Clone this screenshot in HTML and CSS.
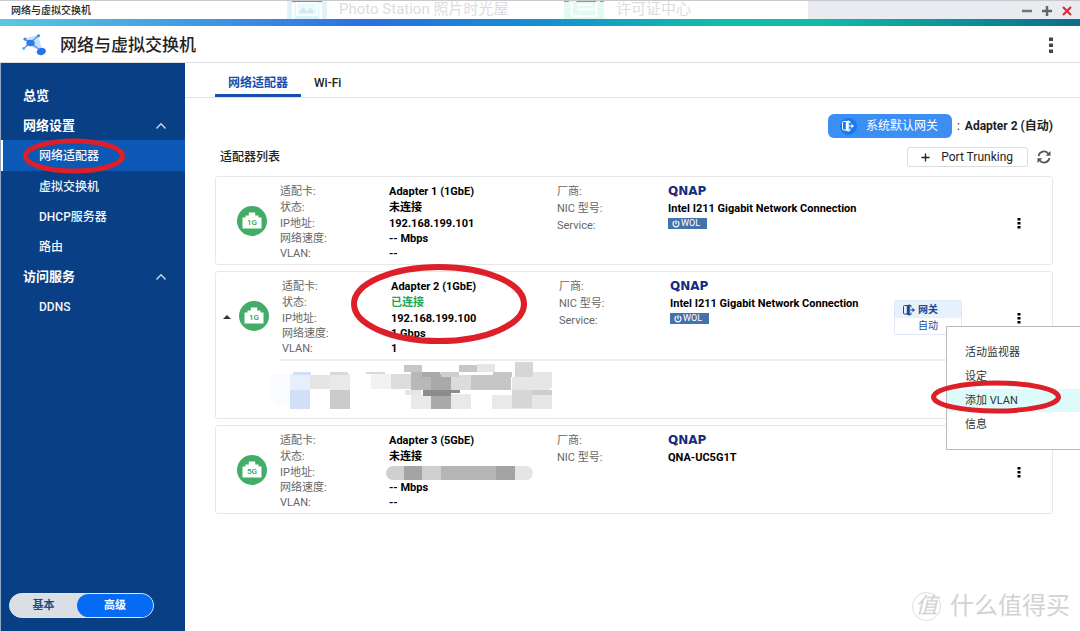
FILE: index.html
```html
<!DOCTYPE html>
<html lang="zh-CN">
<head>
<meta charset="utf-8">
<title>网络与虚拟交换机</title>
<link rel="stylesheet" href="styles.css">
</head>
<body>
<svg class="defs" aria-hidden="true">
  <symbol id="port" viewBox="0 0 30 30"><circle cx="15" cy="15" r="15" fill="#43ad68"/><path fill="#fff" d="M5.500 22.500V11.500H8.500V9.500H11.800V6.500H18.200V9.500H21.500V11.500H24.500V22.500Z"/></symbol>
  <symbol id="dots" viewBox="0 0 4 12"><path d="M.5 1h3v2.500h-3zM.5 5h3v2.500h-3zM.5 9h3v2.500h-3z"/></symbol>
  <symbol id="up" viewBox="0 0 12 8"><path d="M1.500 6.500 6 1.800l4.500 4.700" fill="none" stroke="currentColor" stroke-width="1.400"/></symbol>
  <symbol id="door" viewBox="0 0 12 12"><path d="M4.500 1.500H1.500Q.5 1.500.5 2.500v6.500q0 1 1 1H4M6.500 1.500h1.500v2M6.500 10.500h1.500V8.500" fill="none" stroke="currentColor" stroke-width="1"/><path d="M3.800 1.500 6.800.2v11.600L3.800 10.500zM7 5.500h2.500V3.800L12 6 9.500 8.200V6.500H7z" fill="currentColor"/></symbol>
  <symbol id="power" viewBox="0 0 8 8"><path d="M2.400 1.300A3 3 0 1 0 5.600 1.300M4 .3v4" fill="none" stroke="#fff" stroke-width="1.200"/></symbol>
</svg>

<header class="titlebar">
  <div class="desktop" aria-hidden="true">
    <svg class="ghost-icon" viewBox="0 0 42 19"><path fill="#dff2fa" d="M0 0h42v19H0z"/><path fill="#4b9cb9" d="M5 0h32v1H5z"/><path fill="#fff" d="M5 2h3v17H5zM34 2h3v17h-3z"/><path fill="#eef9fd" stroke="#fff" stroke-width="1.500" d="M10 2h22v13H10z"/><path fill="#cdeaf6" d="m12 13 5-7 4 5 4-4 5 6z"/></svg>
    <span class="ghost-photo">Photo Station 照片时光屋</span>
    <svg class="ghost-icon" viewBox="0 0 42 19"><path fill="#e3faf0" d="M0 0h42v19H0z"/><path fill="#54b78c" d="M0 0h5v1H0zM13 0h21v1H13zM38 0h4v1h-4z"/><path stroke="#fff" stroke-width="2" d="M8 1v15M34 1v15M14 4h16M14 9h18M8 16h26" fill="none"/></svg>
    <span>许可证中心</span>
  </div>
  <span class="window-title">网络与虚拟交换机</span>
  <div class="window-buttons">
    <button aria-label="最小化"><svg viewBox="0 0 10 10"><path d="M0 5h10" stroke="#737478" stroke-width="2.500"/></svg></button>
    <button aria-label="最大化"><svg viewBox="0 0 10 10"><path d="M0 5h10M5 0v10" stroke="#66676b" stroke-width="2.500"/></svg></button>
    <button aria-label="关闭"><svg viewBox="0 0 10 10"><path d="m1 1 8 8M9 1 1 9" stroke="#d3303d" stroke-width="2.200"/></svg></button>
  </div>
</header>
<div class="rainbow"></div>
<header class="app-header">
  <svg class="app-logo" viewBox="0 0 24 22"><path fill="#c9e2fb" d="m4 4 12-3 4 14-9-1z"/><path d="M1 15 8 9l9-8M2 5l7 4 10 8" fill="none" stroke="#5a9af0" stroke-width="1.600"/><ellipse cx="8.500" cy="9" rx="4.200" ry="3.200" fill="#3379ed"/><circle cx="3" cy="5" r="1.600" fill="#3f87ea"/><circle cx="16.500" cy="1.800" r="1.500" fill="#3f87ea"/><circle cx="1.800" cy="14.500" r="1.400" fill="#69a5f0"/><ellipse cx="19.300" cy="17.500" rx="4.600" ry="3.600" transform="rotate(-15 19.300 17.500)" fill="#2a72ea"/></svg>
  <h1>网络与虚拟交换机</h1>
  <button class="app-more" aria-label="更多"><svg viewBox="0 0 4 16"><path fill="#444" d="M0 .5h4v3.500H0zM0 6.500h4V10H0zM0 12.500h4V16H0z"/></svg></button>
</header>

<div class="shell">
  <aside class="sidebar">
    <nav>
      <a class="nav-group" href="#">总览</a>
      <a class="nav-group" href="#">网络设置<svg class="chevron"><use href="#up"/></svg></a>
      <a class="nav-item selected" href="#">网络适配器<svg class="mark mark-nav" viewBox="0 0 102 36"><ellipse cx="51" cy="18" rx="48.500" ry="15"/></svg></a>
      <a class="nav-item" href="#">虚拟交换机</a>
      <a class="nav-item" href="#">DHCP服务器</a>
      <a class="nav-item" href="#">路由</a>
      <a class="nav-group" href="#">访问服务<svg class="chevron"><use href="#up"/></svg></a>
      <a class="nav-item" href="#">DDNS</a>
    </nav>
    <div class="mode">
      <label><input type="radio" name="mode">基本</label>
      <label><input type="radio" name="mode" checked>高级</label>
    </div>
  </aside>

  <main>
    <nav class="tabs"><a class="tab active" href="#">网络适配器</a><a class="tab" href="#">Wi-Fi</a></nav>
    <div class="content">
      <div class="gateway-row">
        <button class="gateway-button"><span class="door-disc"><svg><use href="#door"/></svg></span>系统默认网关</button>
        <span>:</span><strong>Adapter 2 (自动)</strong>
      </div>
      <div class="list-head">
        <h2>适配器列表</h2>
        <button class="trunk"><svg viewBox="0 0 10 10"><path d="M.5 5h9M5 .5v9" stroke="#222" stroke-width="1.500"/></svg>Port Trunking</button>
        <button class="refresh" aria-label="刷新"><svg viewBox="0 0 14 14"><path d="M1.500 6A5.600 5.600 0 0 1 11.500 3.700M12.500 8A5.600 5.600 0 0 1 2.500 10.300" fill="none" stroke="#555" stroke-width="1.700"/><path fill="#555" d="M13.500 1v4.800H8.700zM.5 13V8.200h4.800z"/></svg></button>
      </div>

      <section class="card">
        <div class="card-row">
          <div class="port"><svg><use href="#port"/></svg><span>1G</span></div>
          <dl class="facts">
            <dt>适配卡:</dt><dd>Adapter 1 (1GbE)</dd>
            <dt>状态:</dt><dd>未连接</dd>
            <dt>IP地址:</dt><dd>192.168.199.101</dd>
            <dt>网络速度:</dt><dd>-- Mbps</dd>
            <dt>VLAN:</dt><dd>--</dd>
          </dl>
          <dl class="facts vendor">
            <dt>厂商:</dt><dd><span class="qnap">QNAP</span></dd>
            <dt>NIC 型号:</dt><dd>Intel I211 Gigabit Network Connection</dd>
            <dt>Service:</dt><dd><span class="wol"><svg><use href="#power"/></svg>WOL</span></dd>
          </dl>
          <button class="more" aria-label="更多"><svg><use href="#dots"/></svg></button>
        </div>
      </section>

      <section class="card expanded">
        <div class="card-row">
          <button class="caret" aria-label="收起"></button>
          <div class="port"><svg><use href="#port"/></svg><span>1G</span></div>
          <dl class="facts">
            <dt>适配卡:</dt><dd>Adapter 2 (1GbE)</dd>
            <dt>状态:</dt><dd class="online">已连接</dd>
            <dt>IP地址:</dt><dd>192.168.199.100</dd>
            <dt>网络速度:</dt><dd>1 Gbps</dd>
            <dt>VLAN:</dt><dd>1</dd>
          </dl>
          <dl class="facts vendor">
            <dt>厂商:</dt><dd><span class="qnap">QNAP</span></dd>
            <dt>NIC 型号:</dt><dd>Intel I211 Gigabit Network Connection</dd>
            <dt>Service:</dt><dd><span class="wol"><svg><use href="#power"/></svg>WOL</span></dd>
          </dl>
          <div class="gateway-tag"><b><svg><use href="#door"/></svg>网关</b><span>自动</span></div>
          <button class="more" aria-label="更多"><svg><use href="#dots"/></svg></button>
        </div>
        <div class="details">
          <svg class="mosaic" viewBox="0 0 284 48">
            <path fill="#fafbfe" d="M0 12h20v31H6L0 36z"/>
            <path fill="#e8effc" d="M20 12h20v16H20z"/><path fill="#d3dff6" d="M20 28h20v19H20zM23 10h18v3H23z"/>
            <path fill="#e4e4e5" d="M40 13h20v14H40z"/><path fill="#f2f2f3" d="M101 12h20v15h-20z"/>
            <path fill="#e9e9ea" d="M60 12h20v16H60zM141 33h20v14h-20zM181 32h20v15h-20zM222 33h20v14h-20z"/>
            <path fill="#cbcbcc" d="M60 28h20v19H60z"/><path fill="#d9d9da" d="M60 10h18v3H60zM96 10h19v2H96z"/>
            <path fill="#dcdcdd" d="M121 12h20v15h-20zM181 13h20v15h-20z"/>
            <path fill="#c6c6c7" d="M134 3h18v7h-18zM189 3h18v7h-18zM201 13h40v15h-40zM223 10h19v5h-19z"/>
            <path fill="#b8b8b9" d="M141 10h20v18h-20z"/><path fill="#a9a9aa" d="M152 10h18l2 5h9v13h-20V15h-9zM161 33h20v14h-20z"/>
            <path fill="#8c8c8d" d="M153 28h37v3h-9v3h-28z"/>
            <path fill="#e6e6e7" d="M207 2h18v8h-18zM242 15h20v13h-20zM262 10h20v15l-3 3h-17zM262 33h20v14h-40V33zM135 28h16v5h-16z"/>
            <path fill="#d6d6d7" d="M245 0h18v15h-18zM242 28h20v18h-20z"/>
            <path fill="#cececf" d="M262 28h20v5h-20zM171 10h18v5h-18z"/>
          </svg>
        </div>
        <svg class="mark mark-card" viewBox="0 0 176 80"><ellipse cx="88" cy="40" rx="85" ry="37"/></svg>
        <div class="menu" role="menu">
          <button role="menuitem">活动监视器</button>
          <button role="menuitem">设定</button>
          <button role="menuitem" class="hover">添加 VLAN</button>
          <button role="menuitem">信息</button>
          <svg class="mark mark-menu" viewBox="0 0 130 34"><ellipse cx="65" cy="17" rx="62.500" ry="14"/></svg>
        </div>
      </section>

      <section class="card">
        <div class="card-row">
          <div class="port"><svg><use href="#port"/></svg><span>5G</span></div>
          <dl class="facts">
            <dt>适配卡:</dt><dd>Adapter 3 (5GbE)</dd>
            <dt>状态:</dt><dd>未连接</dd>
            <dt>IP地址:</dt><dd class="masked"></dd>
            <dt>网络速度:</dt><dd>-- Mbps</dd>
            <dt>VLAN:</dt><dd>--</dd>
          </dl>
          <dl class="facts vendor">
            <dt>厂商:</dt><dd><span class="qnap">QNAP</span></dd>
            <dt>NIC 型号:</dt><dd>QNA-UC5G1T</dd>
          </dl>
          <button class="more" aria-label="更多"><svg><use href="#dots"/></svg></button>
        </div>
      </section>
    </div>
    <div class="watermark"><span class="seal">值</span>什么值得买</div>
  </main>
</div>
</body>
</html>
```
FILE: styles.css
```css
* { box-sizing: border-box; }
body {
  margin: 0;
  min-height: 100vh;
  display: flex;
  flex-direction: column;
  overflow-x: hidden;
  background: #fff;
  color: #222;
  font: 12px/16px Roboto, "Noto Sans CJK SC", sans-serif;
}
button { margin: 0; padding: 0; border: 0; background: none; font: inherit; color: inherit; }
a { color: inherit; text-decoration: none; }
svg { display: block; flex: none; }
h1, h2, dl, dd { margin: 0; }
.defs { position: absolute; width: 0; height: 0; }

.titlebar {
  position: relative;
  height: 19px;
  display: flex;
  align-items: center;
  padding: 2px 8px 0 11px;
  border-top: 1px solid #c9c9c9;
  background: linear-gradient(90deg, #fff 0 808px, #e9ebf1 808px);
}
.window-title { flex: 1; font-size: 10px; font-weight: 500; position: relative; }
.window-buttons { display: flex; gap: 10px; position: relative; }
.window-buttons svg { width: 10px; height: 10px; }
.desktop {
  position: absolute;
  inset: 0 auto 2px 286px;
  display: flex;
  align-items: center;
  gap: 11px;
  color: #dcdcde;
  font-size: 15px;
  line-height: 14px;
  white-space: nowrap;
}
.ghost-icon { width: 42px; height: 18px; align-self: flex-start; }
.ghost-photo { width: 213px; }
.rainbow { height: 7px; background: linear-gradient(90deg, #5ac8e2, #2c6fe0 34%, #168fd0 50%, #0fbfa9 67%, #0fbca6 76%, #0d6c8a); }
.app-header {
  height: 37px;
  display: flex;
  align-items: center;
  gap: 14px;
  padding: 1px 27px 0 22px;
  border-bottom: 1px solid #ddd;
}
.app-logo { width: 24px; height: 22px; }
h1 { flex: 1; font-size: 17px; line-height: 24px; font-weight: 500; }
.app-more svg { width: 4px; height: 16px; }

.shell { flex: 1; display: flex; }
.sidebar {
  width: 185px;
  flex: none;
  display: flex;
  flex-direction: column;
  justify-content: space-between;
  padding: 17px 0 13px;
  border-left: 1px solid #8da7c9;
  background: #093f85;
  color: #fff;
}
.nav-group, .nav-item { display: flex; align-items: center; height: 30px; position: relative; }
.nav-group { justify-content: space-between; padding: 1px 18px 0 22px; font-size: 13px; font-weight: 700; }
.nav-item { padding: 1px 0 0 38px; font-weight: 500; color: #f2f6fc; }
.nav-item.selected { height: 31px; background: #0b59b5; box-shadow: inset 2px 0 #fff; }
.chevron { width: 12px; height: 8px; color: #c6d8ee; }
.mode {
  width: 145px;
  height: 25px;
  margin-left: 8px;
  display: flex;
  border: 1px solid #dfe6ee;
  border-radius: 13px;
  background: #dadfe6;
  font-size: 11px;
  font-weight: 700;
  color: #204a82;
}
.mode label { position: relative; flex: 1; display: flex; align-items: center; justify-content: center; padding-top: 1px; border-radius: 12px; }
.mode label:last-child { flex: 0 0 76px; }
.mode label:has(:checked) { background: #066bf4; color: #fff; }
.mode input { position: absolute; inset: 0; margin: 0; appearance: none; }

main { flex: 1; min-width: 0; position: relative; }
.tabs { display: flex; height: 35px; padding-left: 30px; border-bottom: 1px solid #e2e2e2; }
.tab { padding: 12px 13px 0; height: 34px; font-weight: 500; white-space: nowrap; }
.tab.active { color: #164fae; font-weight: 700; border-bottom: 3px solid #164fae; }
.content { padding: 16px 27px 0 30px; }
.gateway-row { display: flex; justify-content: flex-end; align-items: center; gap: 5px; }
.gateway-row strong { font-weight: 700; }
.gateway-button {
  display: flex;
  align-items: center;
  gap: 9px;
  height: 24px;
  padding: 0 14px 0 12px;
  border-radius: 6px;
  background: #3c8df4;
  color: #fff;
}
.door-disc { width: 17px; height: 17px; display: grid; place-items: center; border-radius: 50%; background: #167af0; }
.door-disc svg { width: 12px; height: 12px; }
.list-head { display: flex; align-items: center; height: 20px; margin: 9px 0; padding: 0 2px 0 5px; }
h2 { flex: 1; font-size: 12px; font-weight: 500; }
.trunk {
  display: flex;
  align-items: center;
  gap: 11px;
  height: 20px;
  padding: 0 14px 0 13px;
  border: 1px solid #ddd;
  border-radius: 3px;
}
.trunk svg { width: 9px; height: 9px; }
.refresh { margin-left: 9px; }
.refresh svg { width: 14px; height: 14px; }

.card { position: relative; margin-bottom: 6px; border: 1px solid #e8e8e8; border-radius: 3px; font-size: 11px; }
.card-row {
  position: relative;
  display: flex;
  align-items: flex-start;
  padding: 7px 31px 3px 21px;
}
.expanded .card-row { padding-left: 23px; }
.port { position: absolute; top: 29px; }
.port svg { width: 30px; height: 30px; }
.port span { position: absolute; inset: 9px 0 auto; text-align: center; font-size: 8px; line-height: 15px; font-weight: 500; color: #2f9e57; }
.facts {
  display: grid;
  grid-template-columns: 109px 168px;
  grid-template-rows: 16px 16px;
  grid-auto-rows: 15px;
  margin-left: 43px;
  line-height: 16px;
  white-space: nowrap;
}
.vendor { grid-template-columns: 111px 1fr; grid-template-rows: 17px 17px; grid-auto-rows: 14px; flex: 1; margin-left: 0; }
dt { color: #666; }
dd { font-weight: 700; color: #000; }
dd.online { color: #22a655; }
dd.masked {
  width: 147px;
  height: 14px;
  margin: 1px 0 0 -3px;
  border-radius: 7px;
  background: linear-gradient(90deg, #d0d0d1 0 18px, #a4a4a5 18px 36px, #cfcfd0 36px 55px, #b5b5b6 55px 110px, #a3a3a4 110px 129px, #e5e5e6 129px);
}
.qnap {
  display: block;
  font: 700 12px/14px "DejaVu Sans", sans-serif;
  color: #142b80;
  background: linear-gradient(#e2404c, #e2404c) 6px 10px / 4px 2px no-repeat;
}
.wol {
  display: flex;
  align-items: center;
  gap: 1px;
  width: 39px;
  height: 11px;
  padding-left: 4px;
  background: #4472ac;
  color: #fff;
  font-size: 9px;
  line-height: 11px;
  font-weight: 400;
}
.wol svg { width: 8px; height: 8px; }
.more { align-self: center; }
.more svg { width: 4px; height: 12px; }
.caret {
  position: absolute;
  left: 7px;
  top: 43px;
  border: 4px solid transparent;
  border-top: 0;
  border-bottom-color: #333;
}
.gateway-tag {
  align-self: center;
  width: 68px;
  margin-right: 55px;
  border: 1px solid #dfeaf6;
  border-radius: 2px;
  color: #164a96;
  font-size: 10px;
}
.gateway-tag b { display: flex; align-items: center; gap: 3px; height: 17px; padding-left: 8px; background: #e7f1fc; }
.gateway-tag svg { width: 12px; height: 12px; }
.gateway-tag span { display: block; padding-left: 23px; }
.details { margin-left: 64px; height: 59px; border-top: 2px solid #eee; }
.mosaic { width: 284px; height: 48px; margin: 1px 0 0 -10px; }

.menu {
  position: absolute;
  z-index: 2;
  top: 54px;
  right: -28px;
  width: 134px;
  padding: 14px 0 12px;
  border: 1px solid #bbb;
  border-right: 0;
  background: #fff;
}
.menu button { display: block; width: 100%; height: 23px; margin-bottom: 1px; padding-left: 18px; text-align: left; color: #333; }
.menu .hover { background: #dcfbfa; }

.mark { position: absolute; z-index: 3; pointer-events: none; fill: none; stroke: #dc1f29; stroke-width: 5px; }
.mark-nav { left: 22px; top: -2px; width: 102px; height: 36px; }
.mark-card { left: 135px; top: -8px; width: 176px; height: 80px; stroke-width: 6px; }
.mark-menu { left: -16px; top: 53px; width: 130px; height: 34px; }

.watermark {
  position: absolute;
  right: 10px;
  bottom: 10px;
  display: flex;
  align-items: center;
  gap: 9px;
  color: #d2d2d2;
  font-size: 24px;
  line-height: 30px;
}
.seal { width: 29px; height: 29px; border: 1px solid #dedede; border-radius: 50%; text-align: center; font-size: 22px; line-height: 26px; font-style: italic; }
```
